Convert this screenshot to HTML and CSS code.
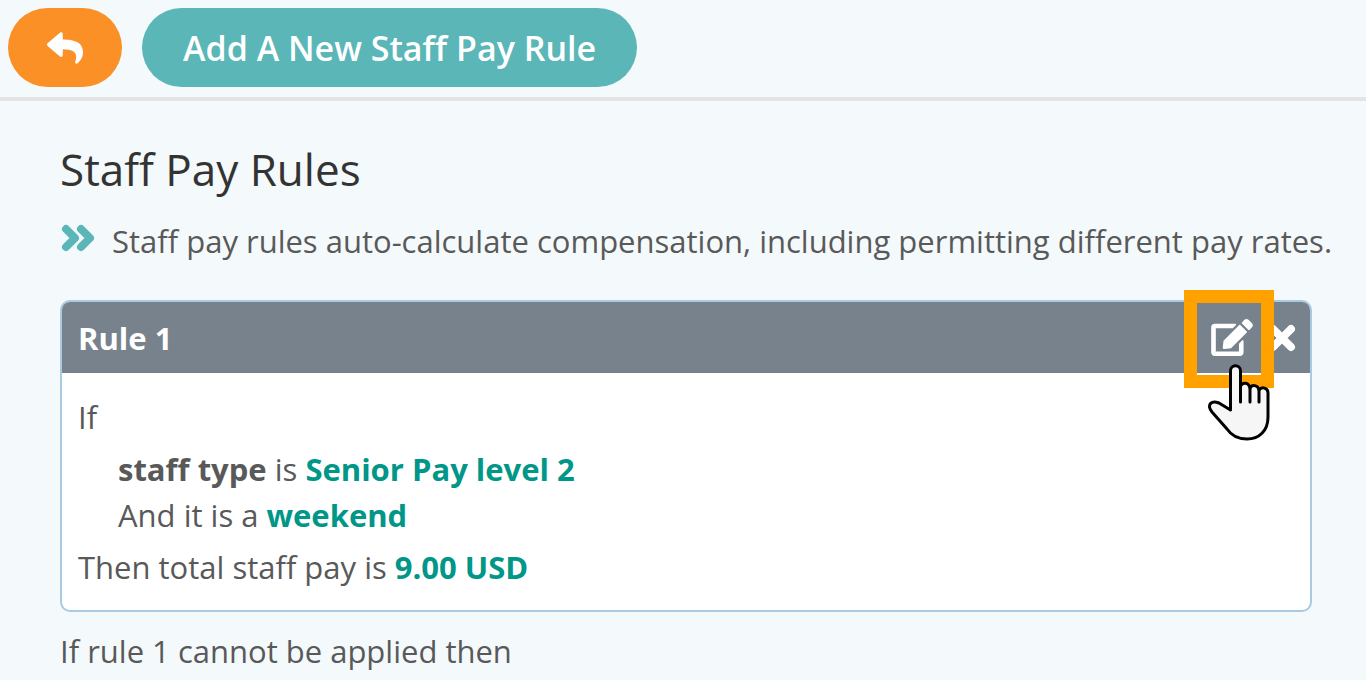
FILE: index.html
```
<!DOCTYPE html>
<html lang="en">
<head>
  <meta charset="UTF-8">
  <title>Staff Pay Rules</title>
  <link rel="stylesheet" href="styles.css">
</head>
<body>

<header class="toolbar">
  <button class="btn btn-back" aria-label="Back">
    <svg class="icon-reply" viewBox="0 0 512 512"><path d="M8.309 189.836L184.313 37.851C199.719 24.546 224 35.347 224 56.015v80.053c160.629 1.839 288 34.032 288 186.258 0 61.441-39.581 122.309-83.333 154.132-13.653 9.931-33.111-2.533-28.077-18.631 45.344-145.012-21.507-183.51-176.59-185.742V360c0 20.7-24.3 31.453-39.687 18.164l-176.004-152c-11.071-9.562-11.086-26.753 0-36.328z"/></svg>
  </button>
  <button class="btn btn-add">Add A New Staff Pay Rule</button>
</header>

<main>
  <h1>Staff Pay Rules</h1>
  <p class="intro">
    <svg class="icon-angles" viewBox="0 0 36 28"><path d="M6 5l9 9-9 9M21 5l9 9-9 9"/></svg>
    Staff pay rules auto-calculate compensation, including permitting different pay rates.
  </p>

  <section class="rule">
    <div class="rule-header">
      <h2>Rule 1</h2>
      <div class="rule-actions">
        <button class="icon-btn" aria-label="Edit rule">
          <svg class="icon-edit" viewBox="0 0 576 512"><path d="M402.6 83.2l90.2 90.2c3.8 3.8 3.8 10 0 13.8L274.4 405.6l-92.8 10.3c-12.4 1.4-22.9-9.1-21.5-21.5l10.3-92.8L388.8 83.2c3.8-3.8 10-3.8 13.8 0zm162-22.9l-48.8-48.8c-15.2-15.2-39.9-15.2-55.2 0l-35.4 35.4c-3.8 3.8-3.8 10 0 13.8l90.2 90.2c3.8 3.8 10 3.8 13.8 0l35.4-35.4c15.2-15.3 15.2-40 0-55.2zM384 346.2V448H64V128h229.8c3.2 0 6.2-1.3 8.5-3.5l40-40c7.6-7.6 2.2-20.5-8.5-20.5H48C21.5 64 0 85.5 0 112v352c0 26.5 21.5 48 48 48h352c26.5 0 48-21.5 48-48V306.2c0-10.7-12.9-16-20.5-8.5l-40 40c-2.2 2.3-3.5 5.3-3.5 8.5z"/></svg>
          <span class="focus-box"></span>
          <svg class="hand" viewBox="0 0 64 80"><path d="M25.5 49V10c0-7 10-7 10 0v15c2-4 8-4 9.5 2 2-4 8-3 9 2 3-4 9-2 9 3v24c0 14-9 22-21 22-9 0-16-4-20-10L7 51c-6-8 0-12 7-9z"/><path d="M35.500 41V25M45 41V27M54 41V29"/></svg>
        </button>
        <button class="icon-btn" aria-label="Delete rule">
          <svg class="icon-close" viewBox="0 0 28 28"><path d="M5 5l18 18M23 5L5 23"/></svg>
        </button>
      </div>
    </div>
    <div class="rule-body">
      <p>If</p>
      <div class="conditions">
        <p><strong>staff type</strong> is <strong class="value">Senior Pay level 2</strong></p>
        <p>And it is a <strong class="value">weekend</strong></p>
      </div>
      <p>Then total staff pay is <strong class="value">9.00 USD</strong></p>
    </div>
  </section>

  <p class="otherwise">If rule 1 cannot be applied then</p>
</main>

</body>
</html>
```
FILE: styles.css
```
* {
  box-sizing: border-box;
}
body {
  margin: 0;
  background-color: #f4f9fc;
  color: #595959;
  font-family: "Open Sans", "Noto Sans", sans-serif;
  font-size: 31px;
  line-height: 46px;
}
h1, h2, p {
  margin: 0;
}
button {
  border: 0;
  font-family: inherit;
  cursor: pointer;
}
svg {
  display: block;
  fill: currentColor;
}

/* top bar */
.toolbar {
  display: flex;
  gap: 20px;
  padding: 8px 8px 10px;
  border-bottom: 4px solid #e3e4e3;
}
.btn {
  height: 79px;
  padding: 0 39px;
  border-radius: 40px;
  color: #fff;
  font-size: 34px;
  font-weight: 600;
}
.btn-back {
  background-color: #fa9026;
}
.btn-add {
  padding: 0 41px;
  background-color: #5ab6b7;
}
.icon-reply {
  width: 36px;
  height: 36px;
}

main {
  padding: 36px 0 0 60px;
}
h1 {
  color: #333;
  font-size: 44px;
  font-weight: 400;
  line-height: 64px;
}
.intro {
  display: flex;
  gap: 16px;
  margin-top: 17px;
  white-space: nowrap;
}
.icon-angles {
  width: 36px;
  height: 28px;
  margin-top: 6px;
  fill: none;
  stroke: #5ab6b7;
  stroke-width: 8;
  stroke-linecap: round;
  stroke-linejoin: round;
}

/* rule card */
.rule {
  margin: 36px 54px 0 0;
  border: 2px solid #a9cae3;
  border-radius: 10px;
  background-color: #fff;
}
.rule-header {
  display: flex;
  justify-content: space-between;
  align-items: center;
  height: 71px;
  padding: 0 14px 0 16px;
  border-radius: 8px 8px 0 0;
  background-color: #77828d;
  color: #fff;
}
h2 {
  font-size: 31px;
  font-weight: 700;
}
.rule-actions {
  display: flex;
  align-items: center;
  gap: 15px;
}
.icon-btn {
  position: relative;
  padding: 0;
  background: none;
  color: #fff;
}
.icon-edit {
  width: 42px;
  height: 37px;
}
.icon-close {
  width: 28px;
  height: 28px;
  stroke: #fff;
  stroke-width: 8;
  stroke-linecap: round;
}
.focus-box {
  position: absolute;
  z-index: 1;
  top: -29px;
  left: -27px;
  width: 90px;
  height: 98px;
  border: 13px solid #ffa200;
}
.hand {
  position: absolute;
  z-index: 2;
  top: 42px;
  left: -6px;
  width: 64px;
  height: 80px;
  overflow: visible;
  fill: #f6f6f6;
  stroke: #000;
  stroke-width: 3;
  stroke-linecap: round;
  stroke-linejoin: round;
}
.rule-body {
  padding: 21px 16px 20px;
}
.conditions {
  margin: 6px 0;
  padding-left: 40px;
}
.value {
  color: #009688;
}
.otherwise {
  margin-top: 16px;
}
```
